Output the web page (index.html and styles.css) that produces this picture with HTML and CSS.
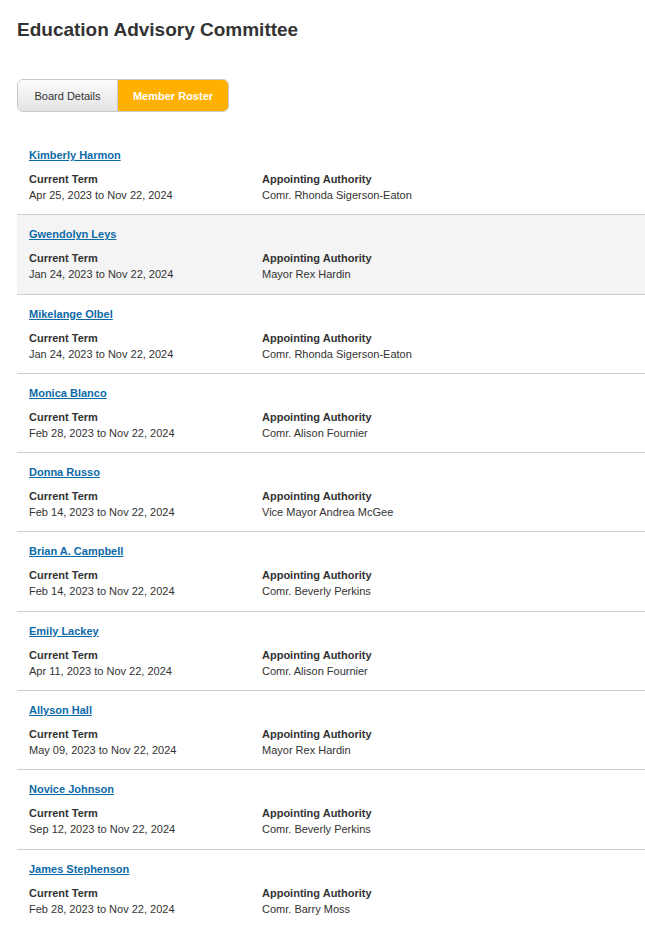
FILE: index.html
```html
<!DOCTYPE html>
<html>
<head>
<meta charset="utf-8">
<link rel="stylesheet" href="styles.css">
</head>
<body>
<div class="page">
  <h1 class="title">Education Advisory Committee</h1>
  <div class="tabs">
    <a class="tab">Board Details</a>
    <a class="tab active">Member Roster</a>
  </div>
  <ul class="roster">
    <li class="member">
      <a class="name" href="#">Kimberly Harmon</a>
      <div class="info"><div><div class="label">Current Term</div><div class="value">Apr 25, 2023 to Nov 22, 2024</div></div><div><div class="label">Appointing Authority</div><div class="value">Comr. Rhonda Sigerson-Eaton</div></div></div>
    </li>
    <li class="member hover">
      <a class="name" href="#">Gwendolyn Leys</a>
      <div class="info"><div><div class="label">Current Term</div><div class="value">Jan 24, 2023 to Nov 22, 2024</div></div><div><div class="label">Appointing Authority</div><div class="value">Mayor Rex Hardin</div></div></div>
    </li>
    <li class="member">
      <a class="name" href="#">Mikelange Olbel</a>
      <div class="info"><div><div class="label">Current Term</div><div class="value">Jan 24, 2023 to Nov 22, 2024</div></div><div><div class="label">Appointing Authority</div><div class="value">Comr. Rhonda Sigerson-Eaton</div></div></div>
    </li>
    <li class="member">
      <a class="name" href="#">Monica Blanco</a>
      <div class="info"><div><div class="label">Current Term</div><div class="value">Feb 28, 2023 to Nov 22, 2024</div></div><div><div class="label">Appointing Authority</div><div class="value">Comr. Alison Fournier</div></div></div>
    </li>
    <li class="member">
      <a class="name" href="#">Donna Russo</a>
      <div class="info"><div><div class="label">Current Term</div><div class="value">Feb 14, 2023 to Nov 22, 2024</div></div><div><div class="label">Appointing Authority</div><div class="value">Vice Mayor Andrea McGee</div></div></div>
    </li>
    <li class="member">
      <a class="name" href="#">Brian A. Campbell</a>
      <div class="info"><div><div class="label">Current Term</div><div class="value">Feb 14, 2023 to Nov 22, 2024</div></div><div><div class="label">Appointing Authority</div><div class="value">Comr. Beverly Perkins</div></div></div>
    </li>
    <li class="member">
      <a class="name" href="#">Emily Lackey</a>
      <div class="info"><div><div class="label">Current Term</div><div class="value">Apr 11, 2023 to Nov 22, 2024</div></div><div><div class="label">Appointing Authority</div><div class="value">Comr. Alison Fournier</div></div></div>
    </li>
    <li class="member">
      <a class="name" href="#">Allyson Hall</a>
      <div class="info"><div><div class="label">Current Term</div><div class="value">May 09, 2023 to Nov 22, 2024</div></div><div><div class="label">Appointing Authority</div><div class="value">Mayor Rex Hardin</div></div></div>
    </li>
    <li class="member">
      <a class="name" href="#">Novice Johnson</a>
      <div class="info"><div><div class="label">Current Term</div><div class="value">Sep 12, 2023 to Nov 22, 2024</div></div><div><div class="label">Appointing Authority</div><div class="value">Comr. Beverly Perkins</div></div></div>
    </li>
    <li class="member">
      <a class="name" href="#">James Stephenson</a>
      <div class="info"><div><div class="label">Current Term</div><div class="value">Feb 28, 2023 to Nov 22, 2024</div></div><div><div class="label">Appointing Authority</div><div class="value">Comr. Barry Moss</div></div></div>
    </li>
  </ul>
</div>
</body>
</html>
```
FILE: styles.css
```css
html, body { margin: 0; padding: 0; background: #fff; }
body { font-family: "Liberation Sans", Arial, sans-serif; color: #333; }
.page { padding: 0 0 0 17px; }
.title { margin: 0; padding-top: 18px; font-size: 19px; line-height: 24px; font-weight: bold; color: #333; }
.tabs { display: inline-flex; margin-top: 37px; border: 1px solid #c8c8c8; border-radius: 6px; overflow: hidden; height: 31px; }
.tab { display: flex; align-items: center; justify-content: center; font-size: 11px; color: #333; }
.tab:first-child { width: 99px; background: linear-gradient(#fbfbfb, #e4e4e4); border-right: 1px solid #c8c8c8; }
.tab.active { width: 110px; background: #ffb000; color: #fff; font-weight: bold; }
.roster { list-style: none; margin: 24px 0 0; padding: 0; }
.member { padding: 11px 12px 11.3px; border-bottom: 1px solid #cccccc; font-size: 11px; line-height: 16px; }
.member:last-child { border-bottom: none; }
.member.hover { background: #f4f4f4; }
.name { display: inline-block; color: #0d6aa8; font-weight: bold; text-decoration: underline; }
.info { display: grid; grid-template-columns: 233px 1fr; margin-top: 8px; }
.label { font-weight: bold; }
```
